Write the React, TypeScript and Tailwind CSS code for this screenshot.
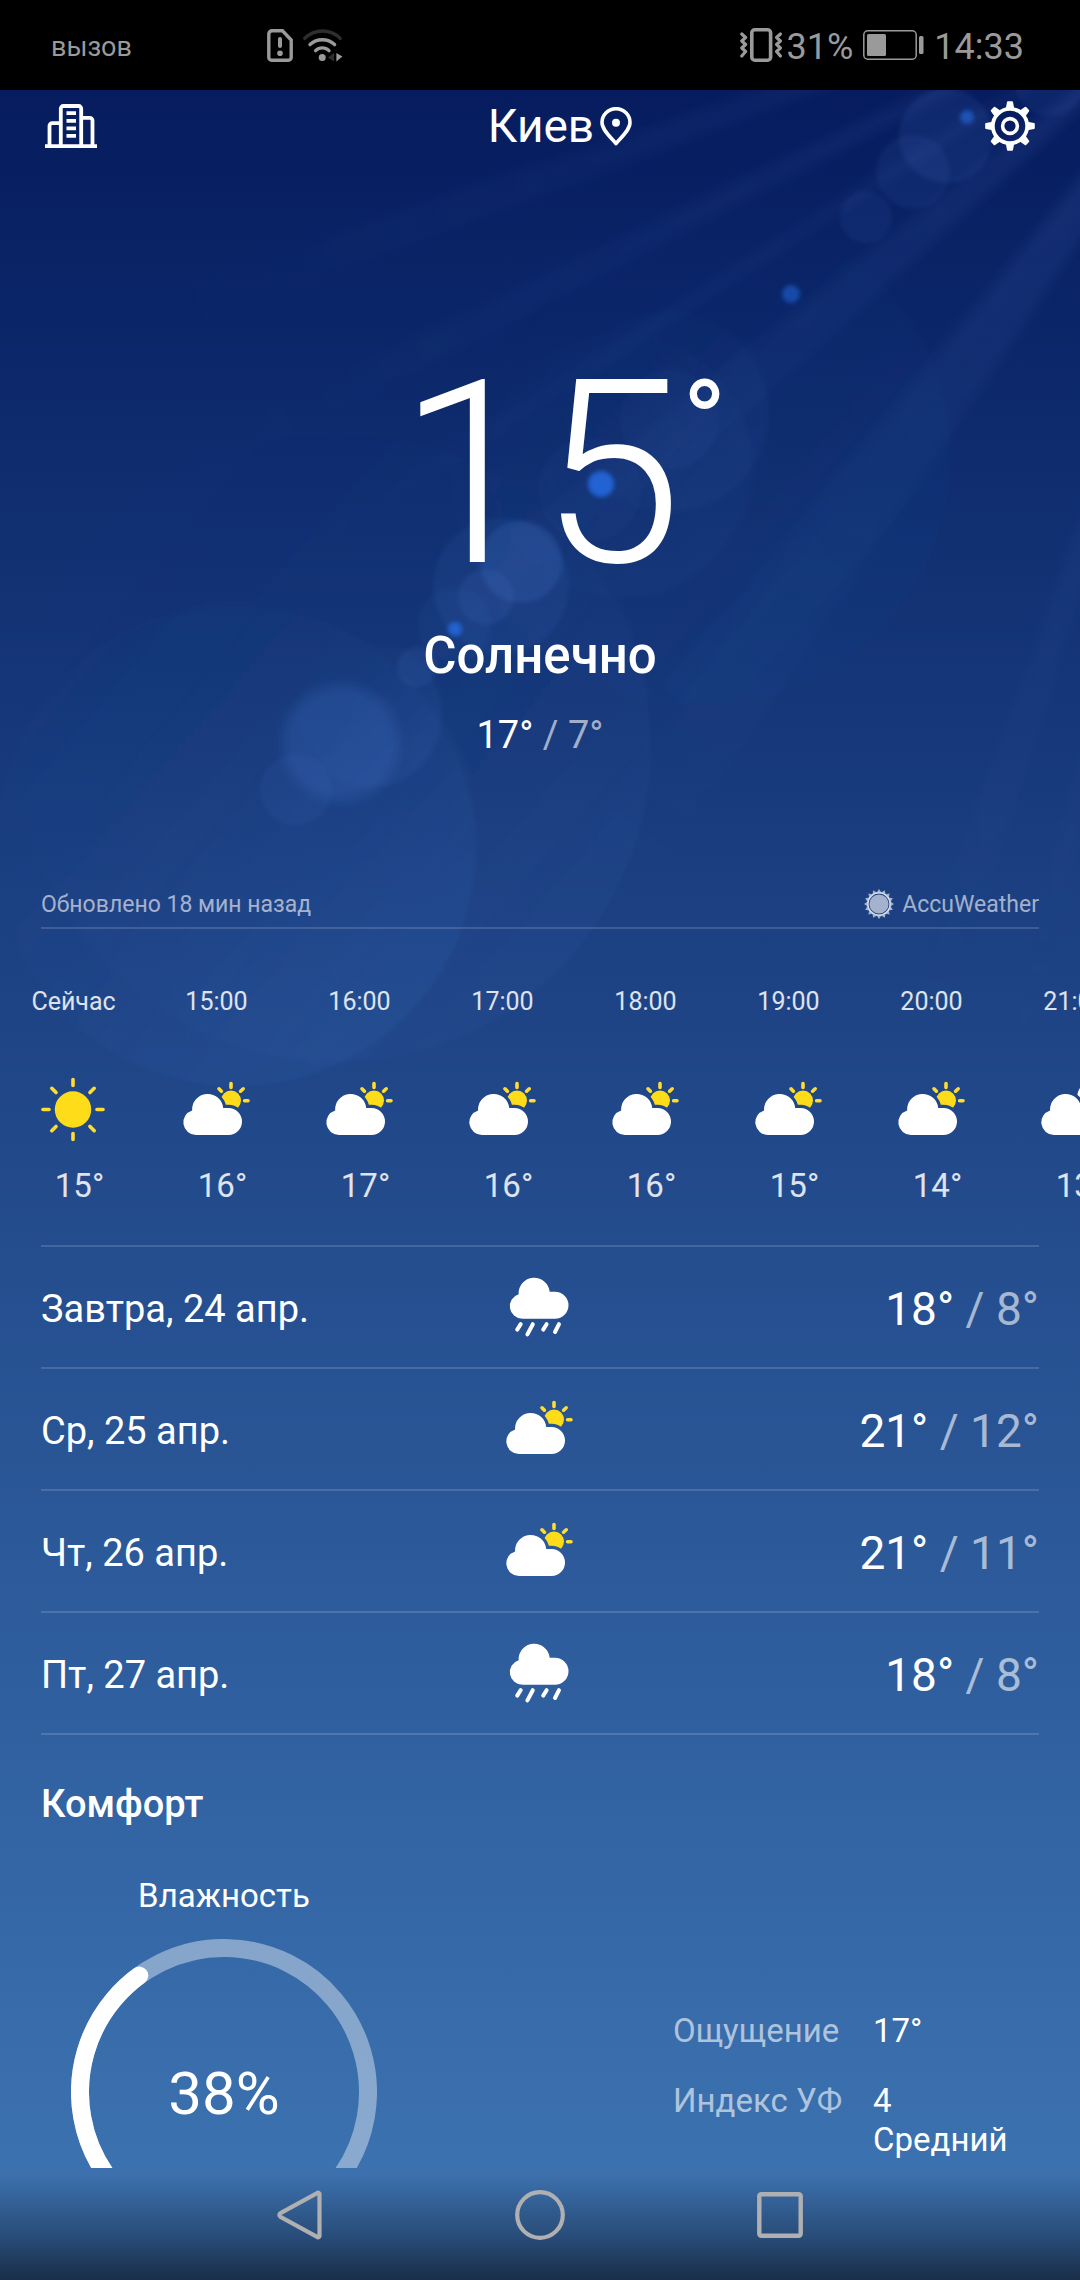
import { useId } from "react";

type Condition = "sun" | "cloudSun" | "cloudMoon" | "rain";

interface HourForecast {
  time: string;
  condition: Condition;
  temp: number;
}

interface DayForecast {
  date: string;
  condition: Condition;
  high: number;
  low: number;
}

const hours: HourForecast[] = [
  { time: "Сейчас", condition: "sun", temp: 15 },
  { time: "15:00", condition: "cloudSun", temp: 16 },
  { time: "16:00", condition: "cloudSun", temp: 17 },
  { time: "17:00", condition: "cloudSun", temp: 16 },
  { time: "18:00", condition: "cloudSun", temp: 16 },
  { time: "19:00", condition: "cloudSun", temp: 15 },
  { time: "20:00", condition: "cloudSun", temp: 14 },
  { time: "21:00", condition: "cloudMoon", temp: 13 },
];

const days: DayForecast[] = [
  { date: "Завтра, 24 апр.", condition: "rain", high: 18, low: 8 },
  { date: "Ср, 25 апр.", condition: "cloudSun", high: 21, low: 12 },
  { date: "Чт, 26 апр.", condition: "cloudSun", high: 21, low: 11 },
  { date: "Пт, 27 апр.", condition: "rain", high: 18, low: 8 },
];

const CLOUD =
  "M11 57A12.6 12.6 0 0 1 7.1 32.4A15.6 15.6 0 0 1 38.2 30H43.5A13.5 13.5 0 0 1 43.5 57Z";

function WeatherIcon({ condition }: { condition: Condition }) {
  const maskId = useId();

  if (condition === "sun") {
    return (
      <svg viewBox="0 0 64 64" className="size-16 overflow-visible">
        <circle cx="31" cy="31.5" r="18.2" fill="#ffdc19" />
        {[0, 45, 90, 135, 180, 225, 270, 315].map((angle) => (
          <path
            key={angle}
            d="M31 1.5V7.5"
            stroke="#ffdc32"
            strokeWidth="3.6"
            strokeLinecap="round"
            transform={`rotate(${angle} 31 31.5)`}
          />
        ))}
      </svg>
    );
  }

  if (condition === "rain") {
    return (
      <svg viewBox="0 0 64 64" className="size-16 overflow-visible">
        <path d={CLOUD} fill="#fff" transform="translate(3.5 -13.2)" />
        <path
          d="M12.7 49.2L9.2 54.6M24.8 49.2L19.4 59.4M38.6 49.2L35.2 54.6M51 49.2L47 57"
          stroke="#fff"
          strokeWidth="4"
          strokeLinecap="round"
        />
      </svg>
    );
  }

  return (
    <svg viewBox="0 0 64 64" className="size-16 overflow-visible">
      <mask id={maskId} maskUnits="userSpaceOnUse" x="-4" y="-4" width="72" height="72">
        <rect x="-4" y="-4" width="72" height="72" fill="#fff" />
        <path d={CLOUD} fill="#000" stroke="#000" strokeWidth="6.4" />
      </mask>
      <g mask={`url(#${maskId})`}>
        {condition === "cloudSun" ? (
          <>
            <circle cx="46" cy="22.6" r="10" fill="#ffdc19" />
            <path
              d="M46 5.6V9.4M59.6 22.8H63M55.6 13.2L58.2 10.8M36.4 13.2L34 10.8"
              stroke="#ffdc32"
              strokeWidth="3.6"
              strokeLinecap="round"
            />
          </>
        ) : (
          <path d="M44 5A14 14 0 0 0 60 26A14 14 0 1 1 44 5Z" fill="#fff" />
        )}
      </g>
      <path d={CLOUD} fill="#fff" />
    </svg>
  );
}

// light rays and lens flare behind the whole screen
function Sky() {
  const blur = useId();
  const soft = useId();
  const fade = useId();
  const rim = useId();

  return (
    <svg
      viewBox="0 0 1080 2280"
      preserveAspectRatio="xMidYMin slice"
      className="absolute inset-0 size-full"
      aria-hidden="true"
    >
      <defs>
        <filter id={blur} x="-20%" y="-20%" width="140%" height="140%">
          <feGaussianBlur stdDeviation="6" />
        </filter>
        <filter id={soft} x="-20%" y="-20%" width="140%" height="140%">
          <feGaussianBlur stdDeviation="2" />
        </filter>
        <radialGradient id={fade} gradientUnits="userSpaceOnUse" cx="1300" cy="-90" r="1500">
          <stop offset="0.15" stopColor="#6f92e8" stopOpacity="0.12" />
          <stop offset="0.4" stopColor="#6f92e8" stopOpacity="0.05" />
          <stop offset="0.8" stopColor="#6f92e8" stopOpacity="0" />
        </radialGradient>
        {/* big discs only show on their lower right side */}
        <linearGradient id={rim} x1="0.1" y1="0.1" x2="0.85" y2="0.75">
          <stop offset="0" stopColor="#4a80d8" stopOpacity="0.01" />
          <stop offset="0.5" stopColor="#4a80d8" stopOpacity="0.03" />
          <stop offset="1" stopColor="#4a80d8" stopOpacity="0.09" />
        </linearGradient>
      </defs>
      <g fill={`url(#${fade})`} filter={`url(#${blur})`}>
        <path d="M1300 -90L100 310L130 350Z" />
        <path d="M1300 -90L200 440L220 475Z" />
        <path d="M1300 -90L300 540L310 560Z" />
        <path d="M1300 -90L480 560L510 590Z" />
        <path d="M1300 -90L640 480L655 494Z" />
        <path d="M1300 -90L660 690L690 700Z" />
        <path d="M1300 -90L560 860L640 900Z" />
        <path d="M1300 -90L800 1300L850 1320Z" />
        <path d="M1300 -90L940 1300L965 1310Z" />
      </g>
      <g fill={`url(#${rim})`} filter={`url(#${soft})`}>
        <circle cx="700" cy="455" r="250" fillOpacity="0.4" />
        <circle cx="336" cy="747" r="315" fillOpacity="0.6" />
        <circle cx="236" cy="846" r="240" />
        <circle cx="668" cy="412" r="100" fillOpacity="0.7" />
        <circle cx="620" cy="465" r="132" fillOpacity="0.5" />
        <circle cx="370" cy="715" r="72" />
      </g>
      <g fill="#5a86e0" filter={`url(#${soft})`}>
        <circle cx="670" cy="420" r="50" fillOpacity="0.04" />
        <circle cx="590" cy="490" r="52" fillOpacity="0.04" />
        <circle cx="501" cy="586" r="68" fillOpacity="0.08" />
        <circle cx="455" cy="625" r="37" fillOpacity="0.06" />
        <circle cx="521" cy="562" r="41" fillOpacity="0.16" />
        <circle cx="486" cy="597" r="28" fillOpacity="0.12" />
        <circle cx="417" cy="667" r="20" fillOpacity="0.1" />
        <circle cx="296" cy="790" r="36" fillOpacity="0.07" />
        <circle cx="866" cy="217" r="26" fillOpacity="0.08" />
        <circle cx="913" cy="172" r="37" fillOpacity="0.09" />
        <circle cx="946" cy="136" r="47" fillOpacity="0.11" />
        <circle cx="1050" cy="80" r="36" fillOpacity="0.08" />
      </g>
      <circle cx="341" cy="743" r="58" fill="#3a72c8" fillOpacity="0.25" filter={`url(#${blur})`} />
      <g fill="#2262d2" filter={`url(#${soft})`}>
        <circle cx="601" cy="484" r="13" />
        <circle cx="455" cy="629" r="7" />
        <circle cx="791" cy="294" r="9" fillOpacity="0.6" />
        <circle cx="967" cy="117" r="7" fillOpacity="0.7" />
      </g>
    </svg>
  );
}

function StatusBar() {
  return (
    <div className="relative flex h-[90px] shrink-0 items-center bg-black pr-[56px] pl-[51px] text-[#9a9a9a]">
      <span className="w-[216px] pt-1 text-[27px] leading-8">вызов</span>
      <svg viewBox="0 0 26 33" className="mr-[10px] h-[33px] w-[26px]" fill="none">
        <path
          d="M5 1.8H15.5L24.2 11V28.5A2.7 2.7 0 0 1 21.5 31.2H4.5A2.7 2.7 0 0 1 1.8 28.5V5A3.2 3.2 0 0 1 5 1.8Z"
          stroke="currentColor"
          strokeWidth="3.4"
        />
        <path d="M13 10V17" stroke="currentColor" strokeWidth="4" strokeLinecap="round" />
        <circle cx="13" cy="24.3" r="2.8" fill="currentColor" />
      </svg>
      <svg viewBox="0 0 40 33" className="h-[33px] w-10" fill="none" strokeWidth="3.4" strokeLinecap="round">
        <path d="M1.8 9.4A25 25 0 0 1 37.2 9.4" stroke="#2e2e2e" />
        <path d="M7 15.6A18 18 0 0 1 31.6 15.6" stroke="currentColor" />
        <path d="M12.6 21.6A9.6 9.6 0 0 1 26 21.6" stroke="currentColor" />
        <circle cx="19.2" cy="28.6" r="3.5" fill="currentColor" />
        <path d="M31 24V32.5L25 28.5Z" fill="#2e2e2e" />
        <path d="M33.4 24L39.4 27.5L33.4 32.5Z" fill="currentColor" />
      </svg>
      <div className="ml-auto flex items-center">
        <svg viewBox="0 0 42 34" className="mr-[5px] h-[34px] w-[42px]" fill="none" stroke="currentColor">
          <rect x="11.8" y="1.8" width="18.8" height="30.4" rx="3" strokeWidth="3.6" />
          <path
            d="M1.8 6L5.6 9.5L1.8 13L5.6 16.5L1.8 20L5.6 23.5L1.8 28M40.4 6L36.6 9.5L40.4 13L36.6 16.5L40.4 20L36.6 23.5L40.4 28"
            strokeWidth="3.2"
            strokeLinejoin="round"
            strokeLinecap="round"
          />
        </svg>
        <span className="pt-1 text-[36px] leading-10">31%</span>
        <svg viewBox="0 0 61 30" className="mx-[10px] h-[30px] w-[61px]" fill="none">
          <rect x="0.8" y="0.8" width="52.4" height="28.4" rx="4" stroke="currentColor" strokeWidth="1.5" />
          <rect x="4" y="4" width="19" height="22" rx="1.5" fill="currentColor" />
          <rect x="56" y="6" width="4.5" height="18" rx="1.5" fill="currentColor" />
        </svg>
        <span className="pt-1 text-[36px] leading-10">14:33</span>
      </div>
    </div>
  );
}

function Header() {
  return (
    <header className="flex h-[72px] items-center justify-between px-[45px]">
      <button aria-label="Города">
        <svg viewBox="0 0 52 44" className="h-11 w-[52px]" fill="none" stroke="#fff" strokeWidth="3.8">
          <path d="M0 42.2H52" />
          <path d="M15.8 42V4.5A2.5 2.5 0 0 1 18.3 2H33.7A2.5 2.5 0 0 1 36.2 4.5V42" />
          <path d="M15.5 19.2H7.5A2.8 2.8 0 0 0 4.5 22V42" />
          <path d="M36.5 13.8H44.5A2.8 2.8 0 0 1 47.5 16.6V42" />
          <path d="M21.5 9.2H31M21.5 16.8H31M21.5 24.3H31M21.5 31.8H31" />
        </svg>
      </button>
      <button className="flex items-center gap-[6px] pl-[38px] text-[46px] leading-[54px]">
        <h1>Киев</h1>
        <svg viewBox="0 0 32 39" className="h-[39px] w-8" fill="none">
          <path
            d="M16 36.5C11 30.5 2 23 2 15.5A14 13.8 0 0 1 30 15.5C30 23 21 30.5 16 36.5Z"
            stroke="#fff"
            strokeWidth="3.6"
            strokeLinejoin="round"
          />
          <circle cx="16" cy="15.8" r="4" fill="#fff" />
        </svg>
      </button>
      <button aria-label="Настройки">
        <svg viewBox="0 0 50 50" className="size-[50px]" fill="none">
          <circle cx="25" cy="25" r="17.2" stroke="#fff" strokeWidth="3.8" />
          <circle cx="25" cy="25" r="7.4" stroke="#fff" strokeWidth="3.6" />
          {[0, 45, 90, 135, 180, 225, 270, 315].map((angle) => (
            <path
              key={angle}
              d="M23 0.2H27A1 1 0 0 1 28 1L29.2 7.5H20.8L22 1A1 1 0 0 1 23 0.2Z"
              fill="#fff"
              transform={`rotate(${angle} 25 25)`}
            />
          ))}
        </svg>
      </button>
    </header>
  );
}

function CurrentWeather() {
  return (
    <section className="mt-[185px] flex flex-col items-center">
      <p className="relative text-[256px] leading-none font-light">
        15
        <span className="absolute top-[18px] left-full text-[120px] leading-none font-normal">°</span>
      </p>
      <p className="mt-[23px] text-[51px] leading-[60px] font-medium">Солнечно</p>
      <p className="mt-[27px] text-[38px] leading-[44px]">
        17° <span className="text-white/60">/ 7°</span>
      </p>
    </section>
  );
}

function Source() {
  return (
    <div className="mx-[41px] mt-[131px] flex items-center justify-between border-b-2 border-white/15 pb-[7px] text-[23px] leading-[30px] text-white/60">
      <span className="pt-[2px]">Обновлено 18 мин назад</span>
      <a href="#" className="flex items-center gap-2">
        <svg viewBox="0 0 30 30" className="size-[30px]" fill="none">
          <g fill="currentColor">
            {Array.from({ length: 16 }, (_, i) => (
              <path key={i} d="M15 0L18 4.4H12Z" transform={`rotate(${i * 22.5} 15 15)`} />
            ))}
            <circle cx="15" cy="15" r="9.6" />
          </g>
          <circle cx="15" cy="15" r="11.1" stroke="currentColor" strokeWidth="1.4" />
        </svg>
        <span className="pt-[2px]">AccuWeather</span>
      </a>
    </div>
  );
}

function HourlyForecast() {
  return (
    <ul className="mt-[58px] flex overflow-x-hidden pl-[2px]">
      {hours.map((hour) => (
        <li key={hour.time} className="flex w-[143px] shrink-0 flex-col items-center text-white/85">
          <span className="text-[25px] leading-[30px]">{hour.time}</span>
          <div className="mt-[61px]">
            <WeatherIcon condition={hour.condition} />
          </div>
          <span className="mt-6 pl-3 text-[33px] leading-[39px]">{hour.temp}°</span>
        </li>
      ))}
    </ul>
  );
}

function DailyForecast() {
  return (
    <ul className="mx-[41px] mt-10 border-t-2 border-white/15">
      {days.map((day) => (
        <li key={day.date} className="grid h-[122px] grid-cols-[1fr_auto_1fr] items-center border-b-2 border-white/15">
          <span className="pt-1 text-[38px] leading-[44px]">{day.date}</span>
          <WeatherIcon condition={day.condition} />
          <span className="pt-1 text-right text-[46px] leading-[54px]">
            {day.high}° <span className="text-white/60">/ {day.low}°</span>
          </span>
        </li>
      ))}
    </ul>
  );
}

function HumidityGauge({ value }: { value: number }) {
  // 300 degree dial that is open at the bottom
  const arc = "M81 277.7A144 144 0 1 1 225 277.7";

  return (
    <div className="relative mt-6 flex size-[306px] items-center justify-center">
      <svg viewBox="0 0 306 306" className="absolute inset-0 size-full" fill="none" strokeWidth="18" strokeLinecap="round">
        <path d={arc} stroke="#fff" strokeOpacity="0.4" />
        <path d={arc} stroke="#fff" pathLength="100" strokeDasharray={`${value} 200`} />
      </svg>
      <span className="pt-1 text-[60px] leading-[70px]">{value}%</span>
    </div>
  );
}

function Comfort() {
  return (
    <section className="mx-[41px] mt-[47px]">
      <h2 className="text-[38px] leading-[44px] font-medium">Комфорт</h2>
      <div className="mt-[50px] grid grid-cols-2 text-[33px] leading-[39px]">
        <div className="flex flex-col items-center justify-self-start pl-[30px]">
          <h3>Влажность</h3>
          <HumidityGauge value={38} />
        </div>
        <dl className="mt-[135px] grid grid-cols-[200px_1fr] content-start gap-y-[31px] pl-[133px]">
          <dt className="text-white/60">Ощущение</dt>
          <dd>17°</dd>
          <dt className="text-white/60">Индекс УФ</dt>
          <dd>
            4<br />
            Средний
          </dd>
        </dl>
      </div>
    </section>
  );
}

function NavBar() {
  return (
    <nav className="relative flex h-28 shrink-0 items-start justify-center gap-[190px] bg-linear-to-b from-[#3d71ae] from-5% via-[#284c78] via-62% to-[#1a2e48] pt-[22px] text-[#b0b0b2]">
      <button aria-label="Назад">
        <svg viewBox="0 0 50 50" className="size-[50px]" fill="none">
          <path
            d="M44.5 3.8V46.2A1.5 1.5 0 0 1 42.5 47.2L5.5 26.8A2 2 0 0 1 5.5 23.2L42.5 2.8A1.5 1.5 0 0 1 44.5 3.8Z"
            stroke="currentColor"
            strokeWidth="4.2"
          />
        </svg>
      </button>
      <button aria-label="Домой">
        <svg viewBox="0 0 50 50" className="size-[50px]" fill="none">
          <circle cx="25" cy="25" r="22.8" stroke="currentColor" strokeWidth="4.2" />
        </svg>
      </button>
      <button aria-label="Недавние">
        <svg viewBox="0 0 50 50" className="size-[50px]" fill="none">
          <rect x="4.3" y="4.3" width="41.4" height="41.4" rx="2" stroke="currentColor" strokeWidth="4.4" />
        </svg>
      </button>
    </nav>
  );
}

export default function App() {
  return (
    <div className="relative flex h-screen flex-col overflow-hidden bg-linear-to-b from-[#061c5e] from-4% via-[#1c4082] via-40% to-[#3f76b4] font-[Roboto,sans-serif] text-white">
      <Sky />
      <StatusBar />
      <main className="relative min-h-0 flex-1 overflow-hidden">
        <Header />
        <CurrentWeather />
        <Source />
        <HourlyForecast />
        <DailyForecast />
        <Comfort />
      </main>
      <NavBar />
    </div>
  );
}
